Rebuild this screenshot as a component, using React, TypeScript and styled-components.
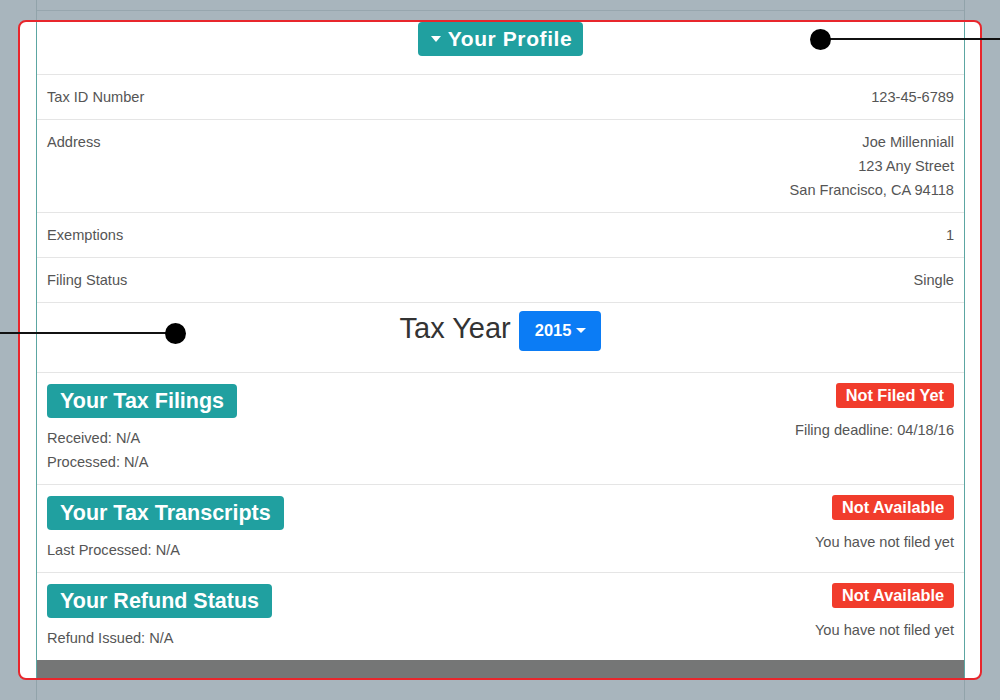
import React from "react";
import styled, { createGlobalStyle } from "styled-components";

const GlobalStyle = createGlobalStyle`
  html, body {
    margin: 0;
    padding: 0;
    background: #a8b5bd;
  }
  body {
    font-family: "Liberation Sans", Arial, sans-serif;
  }
`;

const Page = styled.div`
  position: relative;
  width: 1000px;
  height: 700px;
  overflow: hidden;
  background-color: #a8b5bd;
  background-image: linear-gradient(#91a3aa, #91a3aa),
    linear-gradient(#91a3aa, #91a3aa);
  background-size: 1px 100%, 1px 100%;
  background-position: 36px 0, 964px 0;
  background-repeat: no-repeat;
`;

const GhostRule = styled.div`
  height: 10px;
  margin-left: 37px;
  width: 927px;
  border-bottom: 1px solid #97a6ae;
`;

const Frame = styled.div`
  box-sizing: border-box;
  margin: 9px 0 0 18px;
  width: 964px;
  height: 660px;
  border: 2px solid #e8262c;
  border-radius: 8px;
  background: #fff;
  padding: 0 15px 0 16px;
  display: flex;
  flex-direction: column;
  overflow: hidden;
`;

const Panel = styled.div`
  flex: 1;
  display: flex;
  flex-direction: column;
  border-left: 1px solid #5ca6a2;
  border-right: 1px solid #5ca6a2;
  color: #555;
  font-size: 14.6px;
`;

const ProfileHeader = styled.div`
  height: 52px;
  display: flex;
  justify-content: center;
  align-items: flex-start;
  border-bottom: 1px solid #e5e5e5;
`;

const ProfileButton = styled.div`
  display: flex;
  align-items: center;
  height: 34px;
  padding: 0 11px 0 13px;
  background: #20a0a0;
  border-radius: 4px;
  color: #fff;
  font-weight: 700;
  font-size: 21px;
  letter-spacing: 0.6px;
`;

const Caret = styled.span<{ $w: number; $h: number }>`
  display: inline-block;
  width: 0;
  height: 0;
  border-left: ${(p) => p.$w / 2}px solid transparent;
  border-right: ${(p) => p.$w / 2}px solid transparent;
  border-top: ${(p) => p.$h}px solid #fff;
`;

const InfoRow = styled.div`
  display: flex;
  justify-content: space-between;
  align-items: flex-start;
  padding: 10px 10px;
  line-height: 24px;
  border-bottom: 1px solid #e5e5e5;
`;

const Value = styled.div`
  text-align: right;
`;

const YearRow = styled.div`
  height: 70px;
  box-sizing: border-box;
  padding-top: 7px;
  display: flex;
  justify-content: center;
  align-items: baseline;
  gap: 8px;
  border-bottom: 1px solid #e5e5e5;
`;

const YearTitle = styled.span`
  font-size: 29px;
  color: #333;
  line-height: 32px;
  position: relative;
  top: 2px;
`;

const YearButton = styled.div`
  display: inline-flex;
  align-items: center;
  gap: 5px;
  height: 40px;
  padding: 0 15px 0 16px;
  background: #0b7cf5;
  border-radius: 4px;
  color: #fff;
  font-weight: 700;
  font-size: 16.5px;
`;

const Section = styled.div<{ $last?: boolean }>`
  display: flex;
  justify-content: space-between;
  align-items: flex-start;
  padding: 11px 10px 10px;
  line-height: 24px;
  border-bottom: ${(p) => (p.$last ? "none" : "1px solid #e5e5e5")};
`;

const Column = styled.div<{ $right?: boolean }>`
  display: flex;
  flex-direction: column;
  align-items: ${(p) => (p.$right ? "flex-end" : "flex-start")};
`;

const SectionTitle = styled.div`
  height: 34px;
  line-height: 34px;
  padding: 0 13px;
  background: #20a0a0;
  border-radius: 4px;
  color: #fff;
  font-weight: 700;
  font-size: 21.5px;
  margin-bottom: 8px;
`;

const StatusBadge = styled.div`
  height: 25px;
  line-height: 25px;
  margin-top: -1px;
  padding: 0 10px;
  background: #f13c2c;
  border-radius: 3px;
  color: #fff;
  font-weight: 700;
  font-size: 16.3px;
  margin-bottom: 10px;
`;

const FooterBand = styled.div`
  flex: 1;
  background: #757676;
`;

const Dot = styled.div<{ $x: number; $y: number }>`
  position: absolute;
  left: ${(p) => p.$x - 10}px;
  top: ${(p) => p.$y - 10}px;
  width: 21px;
  height: 21px;
  border-radius: 50%;
  background: #000;
`;

const Leader = styled.div<{ $x: number; $y: number; $w: number }>`
  position: absolute;
  left: ${(p) => p.$x}px;
  top: ${(p) => p.$y}px;
  width: ${(p) => p.$w}px;
  height: 2px;
  background: #111;
`;

const sections = [
  {
    title: "Your Tax Filings",
    lines: ["Received: N/A", "Processed: N/A"],
    badge: "Not Filed Yet",
    note: "Filing deadline: 04/18/16",
  },
  {
    title: "Your Tax Transcripts",
    lines: ["Last Processed: N/A"],
    badge: "Not Available",
    note: "You have not filed yet",
  },
  {
    title: "Your Refund Status",
    lines: ["Refund Issued: N/A"],
    badge: "Not Available",
    note: "You have not filed yet",
  },
];

const App: React.FC = () => {
  return (
    <Page>
      <GlobalStyle />
      <GhostRule />
      <Frame>
        <Panel>
          <ProfileHeader>
            <ProfileButton>
              <Caret $w={11} $h={6} style={{ marginRight: 7 }} />
              Your Profile
            </ProfileButton>
          </ProfileHeader>
          <InfoRow>
            <span>Tax ID Number</span>
            <Value>123-45-6789</Value>
          </InfoRow>
          <InfoRow>
            <span>Address</span>
            <Value>
              Joe Millenniall
              <br />
              123 Any Street
              <br />
              San Francisco, CA 94118
            </Value>
          </InfoRow>
          <InfoRow>
            <span>Exemptions</span>
            <Value>1</Value>
          </InfoRow>
          <InfoRow>
            <span>Filing Status</span>
            <Value>Single</Value>
          </InfoRow>
          <YearRow>
            <YearTitle>Tax Year</YearTitle>
            <YearButton>
              2015
              <Caret $w={10} $h={5} />
            </YearButton>
          </YearRow>
          {sections.map((s, i) => (
            <Section key={s.title} $last={i === sections.length - 1}>
              <Column>
                <SectionTitle>{s.title}</SectionTitle>
                {s.lines.map((l) => (
                  <span key={l}>{l}</span>
                ))}
              </Column>
              <Column $right>
                <StatusBadge>{s.badge}</StatusBadge>
                <span>{s.note}</span>
              </Column>
            </Section>
          ))}
          <FooterBand />
        </Panel>
      </Frame>
      <Leader $x={820} $y={38} $w={180} />
      <Dot $x={820} $y={39} />
      <Leader $x={0} $y={332} $w={175} />
      <Dot $x={175} $y={333} />
    </Page>
  );
};

export default App;
